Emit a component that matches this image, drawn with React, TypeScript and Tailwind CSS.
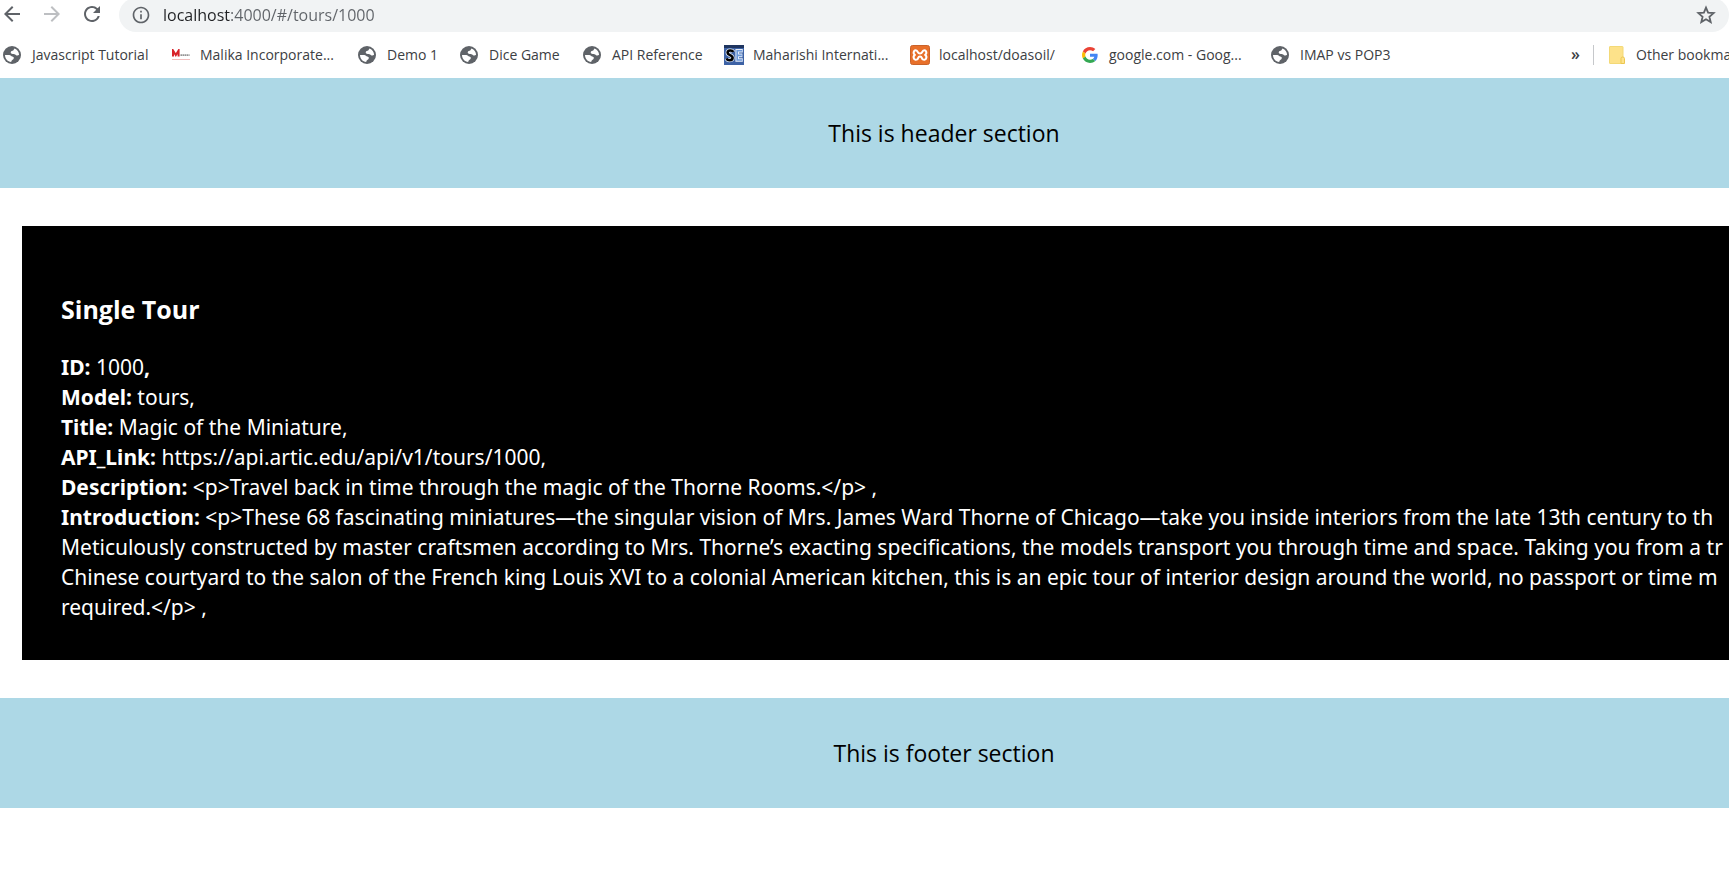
import type { ReactNode } from "react";
import { MdArrowBack, MdArrowForward, MdRefresh, MdInfoOutline } from "react-icons/md";

function Globe() {
  return (
    <svg viewBox="0 0 18 18" className="size-[18px]" aria-hidden="true">
      <circle cx="9" cy="9" r="9" fill="#5f6368" />
      <path
        d="M11.6 2.6 C14.2 3.6 16 6 16.1 8.8 C15 9.8 13.6 9.7 12.8 8.9 C12 8.1 11 8.1 9.8 8 C8.2 7.8 7.4 6.9 7.8 5.9 C8.2 4.9 9.4 5.1 10.2 4.5 C10.9 4 10.8 3 11.6 2.6 Z"
        fill="#fff"
      />
      <path
        d="M2 9 L6.2 9.1 C7.8 9.2 8.1 10.3 9.3 10.6 C10.9 11 11.4 12.2 10.3 13.2 C9.4 14 8.4 14.2 8.2 16 C4.8 15.7 1.9 12.7 2 9 Z"
        fill="#fff"
      />
    </svg>
  );
}

function Star() {
  return (
    <svg viewBox="0 0 22 22" className="size-[22px]" aria-hidden="true">
      <path
        d="M11 3.6 L13.1 8.7 L18.6 9.1 L14.4 12.7 L15.7 18.1 L11 15.2 L6.3 18.1 L7.6 12.7 L3.4 9.1 L8.9 8.7 Z"
        fill="none"
        stroke="currentColor"
        strokeWidth="1.8"
      />
    </svg>
  );
}

function Malika() {
  return (
    <svg viewBox="0 0 20 12" className="h-3 w-5" aria-hidden="true">
      <path d="M2 7.5 V1.5 L4.8 6 L7.6 1.5 V7.5" fill="none" stroke="#d8232a" strokeWidth="2" />
      <path d="M9.5 6.2 H18.5" stroke="#888" strokeWidth="1.8" strokeDasharray="1.4 .6" />
      <path d="M1 10.5 H19" stroke="#f3bcbc" strokeWidth="1" />
    </svg>
  );
}

function SoftEng() {
  return (
    <svg viewBox="0 0 20 20" className="size-5" aria-hidden="true">
      <rect width="20" height="20" fill="#3d62a5" />
      <rect width="20" height="3" fill="#1f3560" />
      <path d="M9.2 7 C8.4 5 3.6 4.8 3.6 7.8 C3.6 10.6 8.6 9.6 8.6 12.8 C8.6 16 3.4 15.8 2.6 13.4" fill="none" stroke="#dfe8f7" strokeWidth="4" />
      <path d="M9.2 7 C8.4 5 3.6 4.8 3.6 7.8 C3.6 10.6 8.6 9.6 8.6 12.8 C8.6 16 3.4 15.8 2.6 13.4" fill="none" stroke="#000" strokeWidth="2.6" />
      <path d="M18.8 5.8 H13.2 V15 H18.8 M13.2 10.4 H18.4" fill="none" stroke="#e6eefa" strokeWidth="3.6" />
      <path d="M18.2 5.8 H13.2 V15 H18.2 M13.2 10.4 H17.8" fill="none" stroke="#6a97d8" strokeWidth="1.6" />
    </svg>
  );
}

function Xampp() {
  return (
    <svg viewBox="0 0 20 20" className="size-5" aria-hidden="true">
      <rect x=".5" y=".5" width="19" height="19" rx="2" fill="#e8702a" stroke="#c9622a" />
      <path
        d="M6.6 5.6 C3.8 4.2 2.6 8.4 4.9 9.9 C2.2 11.8 4.2 16 7.2 14.4 C8.8 13.4 7.6 11.6 10 11.6 C12.4 11.6 11.2 13.4 12.8 14.4 C15.8 16 17.8 11.8 15.1 9.9 C17.4 8.4 16.2 4.2 13.4 5.6 C11.8 6.6 12.6 8.4 10 8.4 C7.4 8.4 8.2 6.6 6.6 5.6 Z"
        fill="none"
        stroke="#fff"
        strokeWidth="2"
        strokeLinejoin="round"
      />
    </svg>
  );
}

function Google() {
  return (
    <svg viewBox="0 0 48 48" className="ml-0.5 size-4" aria-hidden="true">
      <path fill="#EA4335" d="M24 9.5c3.54 0 6.71 1.22 9.21 3.6l6.85-6.85C35.9 2.38 30.47 0 24 0 14.62 0 6.51 5.38 2.56 13.22l7.98 6.19C12.43 13.72 17.74 9.5 24 9.5z" />
      <path fill="#4285F4" d="M46.98 24.55c0-1.57-.15-3.09-.38-4.55H24v9.02h12.94c-.58 2.96-2.26 5.48-4.78 7.18l7.73 6c4.51-4.18 7.09-10.36 7.09-17.65z" />
      <path fill="#FBBC05" d="M10.53 28.59c-.48-1.45-.76-2.99-.76-4.59s.27-3.14.76-4.59l-7.98-6.19C.92 16.46 0 20.12 0 24c0 3.88.92 7.54 2.56 10.78l7.97-6.19z" />
      <path fill="#34A853" d="M24 48c6.48 0 11.93-2.13 15.89-5.81l-7.73-6c-2.15 1.45-4.92 2.3-8.16 2.3-6.26 0-11.57-4.22-13.47-9.91l-7.98 6.19C6.51 42.62 14.62 48 24 48z" />
    </svg>
  );
}

function Folder() {
  return (
    <svg viewBox="0 0 16 18" className="h-[18px] w-4 shrink-0" aria-hidden="true">
      <rect x=".5" y=".5" width="13.5" height="17" rx=".5" fill="#fde28a" stroke="#f3d977" />
      <path d="M12 17.5 V12.5 Q12 11 13.7 11 Q15.5 11 15.5 12.5 V17.5 Z" fill="#fde28a" stroke="#ecc750" />
    </svg>
  );
}

const bookmarks: { label: string; icon: ReactNode; width: string }[] = [
  { label: "Javascript Tutorial", icon: <Globe />, width: "w-[168px]" },
  { label: "Malika Incorporate...", icon: <Malika />, width: "w-[187px]" },
  { label: "Demo 1", icon: <Globe />, width: "w-[102px]" },
  { label: "Dice Game", icon: <Globe />, width: "w-[123px]" },
  { label: "API Reference", icon: <Globe />, width: "w-[141px]" },
  { label: "Maharishi Internati...", icon: <SoftEng />, width: "w-[186px]" },
  { label: "localhost/doasoil/", icon: <Xampp />, width: "w-[170px]" },
  { label: "google.com - Goog...", icon: <Google />, width: "w-[191px]" },
  { label: "IMAP vs POP3", icon: <Globe />, width: "w-[140px]" },
];

const intro = [
  "<p>These 68 fascinating miniatures—the singular vision of Mrs. James Ward Thorne of Chicago—take you inside interiors from the late 13th century to th",
  "Meticulously constructed by master craftsmen according to Mrs. Thorne’s exacting specifications, the models transport you through time and space. Taking you from a tr",
  "Chinese courtyard to the salon of the French king Louis XVI to a colonial American kitchen, this is an epic tour of interior design around the world, no passport or time m",
  "required.</p> ,",
];

function Banner({ children }: { children: ReactNode }) {
  return (
    <div className="flex h-[110px] items-center justify-center bg-[#add8e6] pl-[159px] text-[23px] text-black">
      {children}
    </div>
  );
}

export default function App() {
  return (
    <div className="min-h-screen overflow-hidden bg-white font-['Open_Sans','Noto_Sans',sans-serif]">
      <nav aria-label="Browser" className="text-[#5f6368]">
        <div className="flex h-8 items-start overflow-hidden">
          <div className="flex h-7 w-[119px] shrink-0 items-center gap-4">
            <button aria-label="Back"><MdArrowBack className="size-6" /></button>
            <button aria-label="Forward" className="text-[#bdbfc2]"><MdArrowForward className="size-6" /></button>
            <button aria-label="Reload"><MdRefresh className="size-6" /></button>
          </div>
          <div className="-mt-0.5 flex h-[34px] flex-1 items-center gap-3 rounded-full bg-[#f1f3f4] px-3">
            <MdInfoOutline className="size-5" />
            <input
              aria-label="Address"
              defaultValue="localhost:4000/#/tours/1000"
              className="min-w-0 flex-1 bg-[linear-gradient(to_right,#202124_68px,#5f6368_68px)] bg-clip-text text-base text-transparent caret-black outline-none"
            />
            <button aria-label="Bookmark this page"><Star /></button>
          </div>
        </div>
        <div className="flex h-[46px] items-center overflow-hidden pl-[3px] text-sm whitespace-nowrap text-[#3c4043]">
          {bookmarks.map((b) => (
            <a key={b.label} href="#" className={`flex shrink-0 items-center gap-2 ${b.width}`}>
              <span className="flex w-[21px] shrink-0 items-center">{b.icon}</span>
              {b.label}
            </a>
          ))}
          <button aria-label="More bookmarks" className="ml-auto w-[22px] shrink-0 pb-0.5 text-left text-base font-semibold">»</button>
          <a href="#" className="flex h-5 w-[136px] shrink-0 items-center gap-[11px] border-l border-[#c6c8cb] pl-[15px]">
            <Folder />
            Other bookma
          </a>
        </div>
      </nav>
      <Banner><header>This is header section</header></Banner>
      <main className="my-[38px] ml-[22px] overflow-hidden bg-black px-[39px] pt-[63px] pb-[38px] font-['Noto_Sans','Open_Sans',sans-serif] text-[21px] leading-[30px] whitespace-nowrap text-white">
        <h1 className="mb-[23px] font-['Open_Sans','Noto_Sans',sans-serif] text-[25px] leading-10 font-bold">Single Tour</h1>
        <p><b>ID:</b> 1000<b>,</b></p>
        <p><b>Model:</b> tours,</p>
        <p><b>Title:</b> Magic of the Miniature,</p>
        <p><b>API_Link:</b> https://api.artic.edu/api/v1/tours/1000,</p>
        <p><b>Description:</b> {"<p>Travel back in time through the magic of the Thorne Rooms.</p> ,"}</p>
        <p>
          <b>Introduction:</b> {intro[0]}<br />
          {intro[1]}<br />
          {intro[2]}<br />
          {intro[3]}
        </p>
      </main>
      <Banner><footer>This is footer section</footer></Banner>
    </div>
  );
}
